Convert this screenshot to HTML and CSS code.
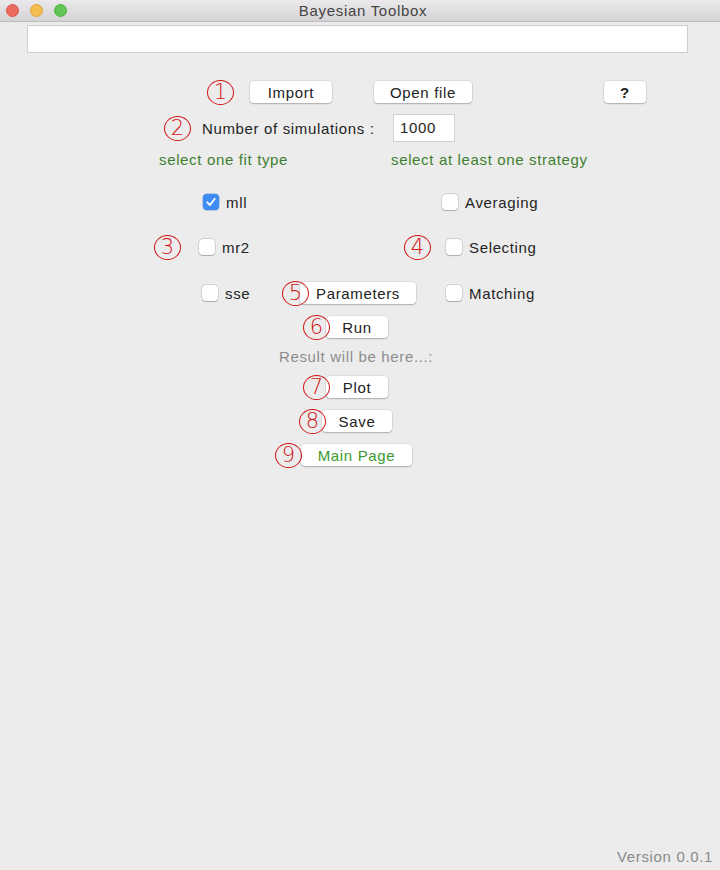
FILE: index.html
```html
<!DOCTYPE html>
<html>
<head>
<meta charset="utf-8">
<title>Bayesian Toolbox</title>
<link rel="stylesheet" href="styles.css">
</head>
<body>
<div class="window">
  <div class="titlebar">
    <div class="lights">
      <span class="light red"></span>
      <span class="light yellow"></span>
      <span class="light green"></span>
    </div>
    <div class="title">Bayesian Toolbox</div>
  </div>

  <div class="content">
    <div class="pathbox"></div>

    <div class="row r1">
      <span class="num">1</span>
      <button class="btn b-import">Import</button>
      <button class="btn b-open">Open file</button>
      <button class="btn b-help">?</button>
    </div>

    <div class="row r2">
      <span class="num">2</span>
      <span class="sim-label">Number of simulations :</span>
      <div class="numbox">1000</div>
    </div>

    <div class="row r3">
      <span class="hint hint-left">select one fit type</span>
      <span class="hint">select at least one strategy</span>
    </div>

    <div class="row r4">
      <div class="group g-mll">
        <span class="cb checked"><svg viewBox="0 0 16 16" width="16" height="16"><path d="M4.3 8.3 L7 11 L11.8 4.8" fill="none" stroke="#fff" stroke-width="1.8" stroke-linecap="round" stroke-linejoin="round"/></svg></span>
        <span class="cb-label">mll</span>
      </div>
      <div class="group">
        <span class="cb"></span>
        <span class="cb-label">Averaging</span>
      </div>
    </div>

    <div class="row r5">
      <div class="group g-mr2">
        <span class="num">3</span>
        <span class="cb cb-mr2"></span>
        <span class="cb-label">mr2</span>
      </div>
      <div class="group">
        <span class="num">4</span>
        <span class="cb cb-sel"></span>
        <span class="cb-label">Selecting</span>
      </div>
    </div>

    <div class="row r6">
      <div class="group g-sse">
        <span class="cb"></span>
        <span class="cb-label">sse</span>
      </div>
      <span class="num overlap">5</span>
      <button class="btn b-params">Parameters</button>
      <div class="group g-match">
        <span class="cb"></span>
        <span class="cb-label">Matching</span>
      </div>
    </div>

    <div class="row r7">
      <span class="num overlap-s">6</span>
      <button class="btn b-run">Run</button>
    </div>

    <div class="row r8">
      <span class="result">Result will be here...:</span>
    </div>

    <div class="row r9">
      <span class="num overlap-s">7</span>
      <button class="btn b-plot">Plot</button>
    </div>

    <div class="row r10">
      <span class="num overlap-s">8</span>
      <button class="btn b-save">Save</button>
    </div>

    <div class="row r11">
      <span class="num overlap-xs">9</span>
      <button class="btn b-main">Main Page</button>
    </div>

    <div class="version">Version 0.0.1</div>
  </div>
</div>
</body>
</html>
```

FILE: styles.css
```css
* { box-sizing: border-box; }

html, body {
  margin: 0;
  padding: 0;
  width: 720px;
  height: 870px;
  overflow: hidden;
  background: #ececec;
  font-family: "Liberation Sans", Arial, sans-serif;
  font-size: 15px;
  color: #242424;
}

.window {
  width: 720px;
  height: 870px;
  display: flex;
  flex-direction: column;
}

.titlebar {
  height: 22px;
  flex: none;
  background: linear-gradient(#ebe9eb, #d5d3d5);
  border-bottom: 1px solid #bcbcbc;
  display: flex;
  align-items: center;
  position: relative;
}

.lights {
  display: flex;
  gap: 11px;
  padding-left: 6px;
}

.light {
  width: 13px;
  height: 13px;
  border-radius: 50%;
  display: block;
}
.light.red { background: #ee6b60; border: 0.5px solid #d9564b; }
.light.yellow { background: #f6be4f; border: 0.5px solid #dea33a; }
.light.green { background: #62c655; border: 0.5px solid #4fae43; }

.title {
  position: absolute;
  left: 0;
  right: 0;
  top: 0;
  bottom: 0;
  display: flex;
  align-items: center;
  justify-content: center;
  padding-left: 6px;
  font-size: 15px;
  color: #444;
  letter-spacing: 0.7px;
}

.content {
  flex: 1;
  display: flex;
  flex-direction: column;
}

.pathbox {
  margin: 3px 0 0 27px;
  width: 661px;
  height: 28px;
  background: #fff;
  border: 1px solid #cfcfcf;
  box-shadow: inset 0 0 1px rgba(0,0,0,0.08);
}

.row {
  display: flex;
  align-items: center;
  flex: none;
  letter-spacing: 0.65px;
}

.num {
  width: 27px;
  height: 25px;
  border: 1.2px solid #d21313;
  border-radius: 50%;
  color: #d21313;
  font-family: "DejaVu Sans", sans-serif;
  font-size: 21px;
  font-weight: 200;
  line-height: 22px;
  text-align: center;
  letter-spacing: 0;
  flex: none;
  position: relative;
  z-index: 1;
}

.btn {
  font-family: inherit;
  font-size: 15px;
  color: #222;
  background: #fff;
  border: none;
  border-radius: 4px;
  height: 22px;
  padding: 0;
  box-shadow: 0 0 0 0.5px rgba(0,0,0,0.12), 0 1px 1.5px rgba(0,0,0,0.22);
  flex: none;
  letter-spacing: 0.65px;
}

/* row 1 */
.r1 { margin-top: 26px; height: 26px; padding-left: 207px; }
.b-import { width: 82px; margin-left: 16px; }
.b-open { width: 98px; margin-left: 42px; }
.b-help { width: 42px; margin-left: 132px; font-weight: bold; }

/* row 2 */
.r2 { margin-top: 9px; height: 28px; padding-left: 164px; }
.sim-label { width: 191px; margin-left: 11px; }
.numbox {
  width: 62px;
  height: 28px;
  background: #fff;
  border: 1px solid #d2d2d2;
  padding-left: 6px;
  line-height: 26px;
}

/* row 3 */
.r3 { margin-top: 8px; height: 18px; padding-left: 159px; }
.hint { color: #3f7f31; }
.hint-left { width: 232px; }

/* checkboxes */
.group { display: flex; align-items: center; flex: none; }
.cb {
  width: 16px;
  height: 16px;
  border-radius: 4px;
  background: #fff;
  box-shadow: 0 0 0 0.5px rgba(0,0,0,0.2), 0 0.5px 1px rgba(0,0,0,0.2);
  flex: none;
  display: block;
}
.cb.checked {
  background: #3f8cf3;
  box-shadow: 0 0 0 0.5px rgba(30,90,200,0.5);
}
.cb svg { display: block; }
.cb-label { margin-left: 7px; }

.r4 { margin-top: 22px; height: 24px; padding-left: 203px; }
.g-mll { width: 239px; }

.r5 { margin-top: 20px; height: 26px; padding-left: 154px; }
.g-mr2 { width: 250px; }
.cb-mr2 { margin-left: 18px; }
.cb-sel { margin-left: 15px; }

.r6 { margin-top: 20px; height: 26px; padding-left: 202px; }
.g-sse { width: 80px; }
.overlap { margin-right: -9px; }
.b-params { width: 116px; }
.g-match { margin-left: 30px; }

.overlap-s { margin-right: -4px; }
.overlap-xs { margin-right: -1px; }

.r7 { margin-top: 8px; height: 26px; padding-left: 303px; }
.b-run { width: 62px; }

.r8 { margin-top: 8px; height: 16px; padding-left: 279px; }
.result { color: #8c8c8c; }

.r9 { margin-top: 10px; height: 26px; padding-left: 303px; }
.b-plot { width: 62px; }

.r10 { margin-top: 8px; height: 26px; padding-left: 299px; }
.b-save { width: 70px; }

.r11 { margin-top: 8px; height: 26px; padding-left: 275px; }
.b-main { width: 111px; color: #3c9a30; }

.version {
  margin-top: auto;
  align-self: flex-end;
  margin-right: 7px;
  margin-bottom: 5px;
  color: #8a8a8a;
  font-size: 15px;
  letter-spacing: 0.65px;
}
```
